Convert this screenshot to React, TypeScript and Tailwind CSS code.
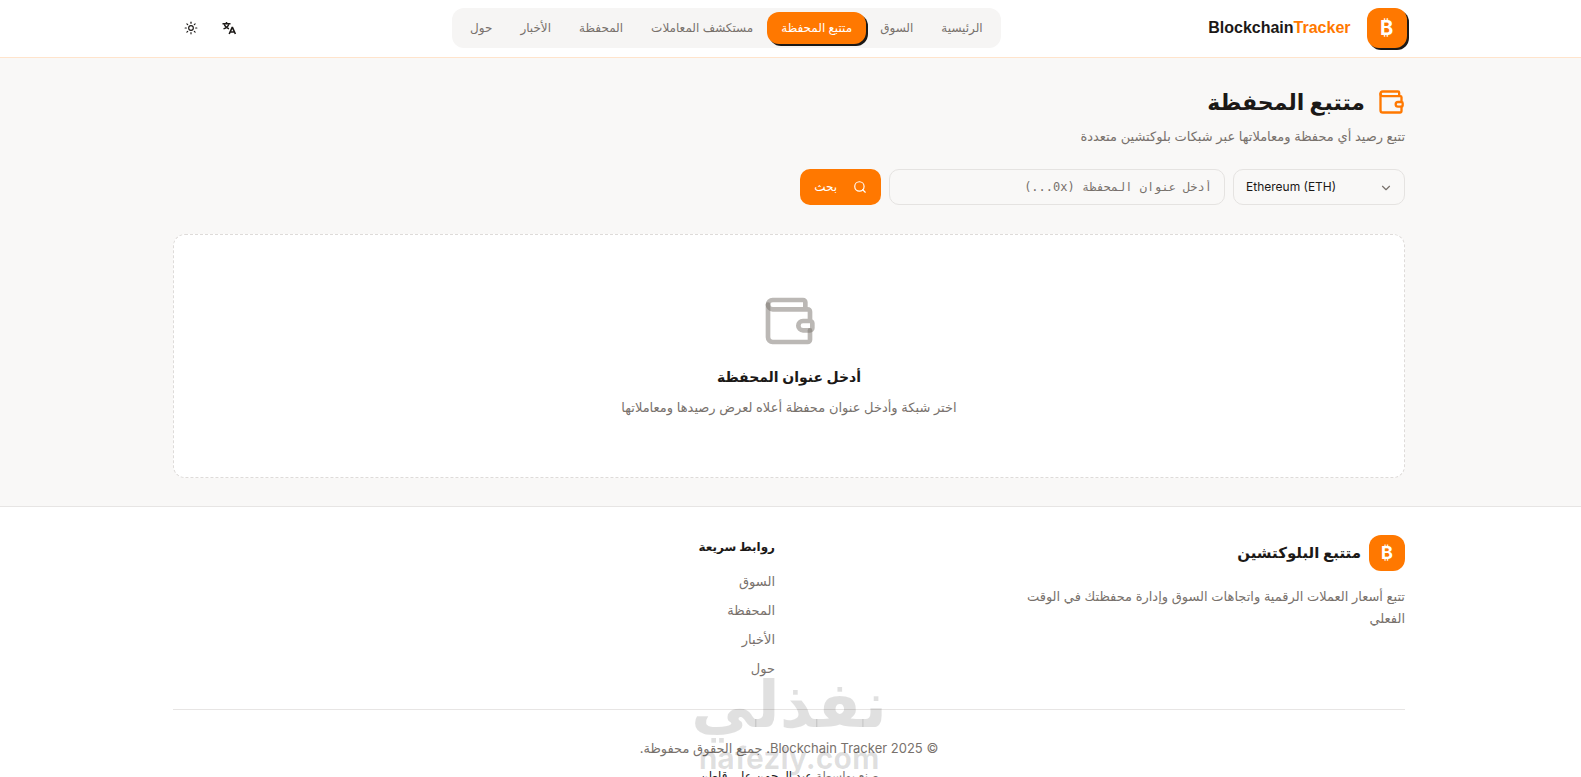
import { ChevronDown, Search, Sun, Wallet } from "lucide-react";

const navItems = [
  { label: "الرئيسية" },
  { label: "السوق" },
  { label: "متتبع المحفظة", active: true },
  { label: "مستكشف المعاملات" },
  { label: "المحفظة" },
  { label: "الأخبار" },
  { label: "حول" },
];

const quickLinks = ["السوق", "المحفظة", "الأخبار", "حول"];

function TranslateIcon() {
  return (
    <svg viewBox="0 0 16 16" className="size-4" fill="none" stroke="currentColor" aria-hidden="true">
      <path strokeWidth="1.5" d="M1.5 3.8h8M5.5 2v1.8" />
      <path strokeWidth="1.3" d="M3.2 4.2c.6 2 2.4 3.7 4.8 4.6M7.8 4.2C7.2 6.2 5.2 8 2.5 8.9" />
      <path strokeWidth="1.6" strokeLinejoin="bevel" d="M8.2 14l3.1-6.8L14.4 14M9.2 12h4.2" />
    </svg>
  );
}

function Header() {
  return (
    <header className="border-b border-[#ffe4cc] bg-white pb-px">
      <div className="mx-auto flex h-14 max-w-7xl items-center justify-between px-6">
        <a href="#" className="flex items-center gap-4">
          <span className="flex size-10 items-center justify-center rounded-xl bg-[#ff7800] text-xl font-bold text-white shadow-[2px_2px_0_#1c1917]">₿</span>
          <span dir="ltr" className="font-['Liberation_Sans',sans-serif] font-bold text-[#1c1917]">
            Blockchain<span className="text-[#ff7800]">Tracker</span>
          </span>
        </a>

        <nav className="flex rounded-xl bg-[#f6f5f4] p-1">
          {navItems.map((item) => (
            <a
              key={item.label}
              href="#"
              className={
                item.active
                  ? "rounded-xl bg-[#ff7800] px-3.5 py-1.5 text-xs leading-5 font-medium text-white shadow-[2px_2px_0_#1c1917]"
                  : "rounded-xl px-3.5 py-1.5 text-xs leading-5 text-[#78716c]"
              }
            >
              {item.label}
            </a>
          ))}
        </nav>

        <div className="flex items-center gap-1.5">
          <button type="button" aria-label="اللغة" className="flex size-8 items-center justify-center text-[#1c1917]">
            <TranslateIcon />
          </button>
          <button type="button" aria-label="المظهر" className="flex size-8 items-center justify-center text-[#1c1917]">
            <Sun size={14} />
          </button>
        </div>
      </div>
    </header>
  );
}

function SearchForm() {
  return (
    <form className="mt-[23px] flex gap-2" onSubmit={(e) => e.preventDefault()}>
      <div className="relative w-[172px]">
        <select
          dir="ltr"
          aria-label="الشبكة"
          className="h-9 w-full appearance-none rounded-[10px] border border-[#e5e3e1] bg-transparent px-3 text-xs text-[#1c1917]"
        >
          <option>Ethereum (ETH)</option>
        </select>
        <ChevronDown size={14} className="pointer-events-none absolute top-3 right-3 text-[#78716c]" />
      </div>
      <input
        type="text"
        aria-label="عنوان المحفظة"
        placeholder="أدخل عنوان المحفظة (0x...)"
        className="h-9 w-[336px] rounded-[10px] border border-[#e5e3e1] bg-transparent px-3 font-['DejaVu_Sans_Mono',monospace] text-xs placeholder:text-[#78716c]"
      />
      <button type="submit" className="flex h-9 items-center gap-4 rounded-[10px] bg-[#ff7800] px-3.5 text-xs font-medium text-white">
        <Search size={14} />
        بحث
      </button>
    </form>
  );
}

function Footer() {
  return (
    <footer className="border-t border-[#e7e5e4] bg-white pr-[3px]">
      <div className="mx-auto max-w-7xl px-6 pt-7 pb-8">
        <div className="grid grid-cols-2 gap-7">
          <div>
            <div className="flex items-center gap-2">
              <span className="flex size-9 items-center justify-center rounded-xl bg-[#ff7800] text-lg font-bold text-white">₿</span>
              <span className="text-[15px] font-semibold text-[#1c1917]">متتبع البلوكتشين</span>
            </div>
            <p className="mt-3.5 max-w-sm text-[13px] leading-[22px] text-[#78716c]">
              تتبع أسعار العملات الرقمية واتجاهات السوق وإدارة محفظتك في الوقت الفعلي
            </p>
          </div>
          <div>
            <h3 className="text-xs leading-6 font-bold text-[#1c1917]">روابط سريعة</h3>
            <ul className="mt-3 space-y-2">
              {quickLinks.map((label) => (
                <li key={label} className="text-[13px] leading-[21px] text-[#78716c]">
                  <a href="#">{label}</a>
                </li>
              ))}
            </ul>
          </div>
        </div>

        <div className="relative mt-[30px] border-t border-[#e7e5e4] pt-[26px] text-center text-[13px] leading-6 text-[#78716c]">
          <p>© 2025 Blockchain Tracker. جميع الحقوق محفوظة.</p>
          <p className="mt-1 text-xs leading-6">
            صنع بواسطة <span className="font-medium text-[#1c1917]">عبد الرحمن علي قاطن</span>
          </p>
          {/* Watermark over the footer */}
          <div className="pointer-events-none absolute inset-x-0 -top-11 text-black/12" aria-hidden="true">
            <div className="text-[64px] leading-[76px] font-bold">نفذلي</div>
            <div className="text-[30px] leading-8 font-bold">nafezly.com</div>
          </div>
        </div>
      </div>
    </footer>
  );
}

export default function App() {
  return (
    <div dir="rtl" className="h-screen overflow-hidden bg-[#f9f8f7] font-['Inter','DejaVu_Sans',sans-serif]">
      <Header />
      <div className="pr-[3px]">
        <main className="mx-auto max-w-7xl px-6 py-7">
          <div className="flex items-center gap-3">
            <Wallet className="size-7 text-[#ff7800]" />
            <h1 className="text-[22px] leading-8 font-bold text-[#1c1917]">متتبع المحفظة</h1>
          </div>
          <p className="mt-2 text-[13px] leading-5 text-[#78716c]">تتبع رصيد أي محفظة ومعاملاتها عبر شبكات بلوكتشين متعددة</p>
          <SearchForm />
          <section className="mt-[29px] flex flex-col items-center rounded-xl border border-dashed border-[#dedbd9] bg-white py-[58px]">
            <Wallet className="size-14 text-[#78716c]/50" />
            <h2 className="mt-3.5 text-sm leading-7 font-semibold text-[#1c1917]">أدخل عنوان المحفظة</h2>
            <p className="mt-1 text-[13px] leading-6 text-[#78716c]">اختر شبكة وأدخل عنوان محفظة أعلاه لعرض رصيدها ومعاملاتها</p>
          </section>
        </main>
      </div>
      <Footer />
    </div>
  );
}
